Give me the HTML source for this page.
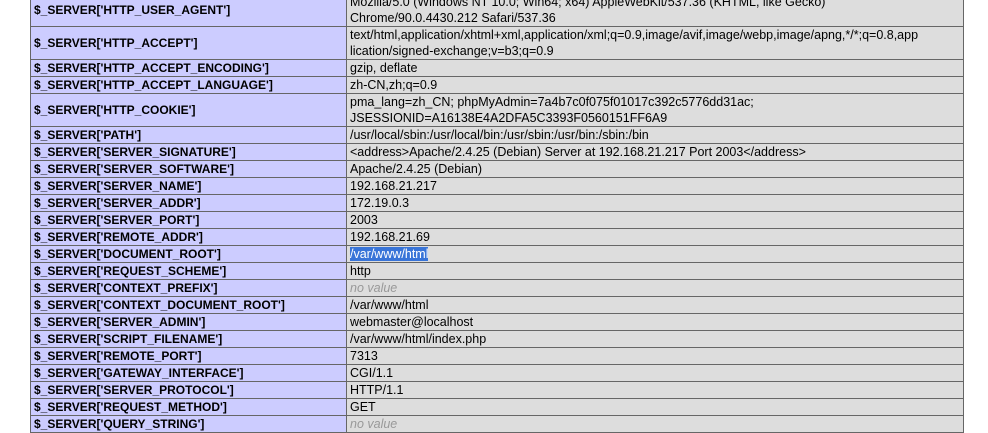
<!DOCTYPE html>
<html><head><meta charset="utf-8"><style>
html,body{margin:0;padding:0;background:#fff;width:988px;height:419px;overflow:hidden}
table{position:absolute;left:30px;top:-7px;width:934px;border-collapse:collapse;font-family:"Liberation Sans","Noto Sans CJK SC",sans-serif;font-size:12.5px;color:#000}
td{border:1px solid #666;padding:0 3px;line-height:16px;vertical-align:middle}
td.e{background:#ccf;font-weight:bold;width:309px;font-size:12px}
td.v{background:#ddd;word-break:break-all}
i{color:#999}
.sel{background:#3874d8;color:#fff}
</style></head><body>
<table>
<tr><td class="e">$_SERVER['HTTP_USER_AGENT']</td><td class="v">Mozilla/5.0 (Windows NT 10.0; Win64; x64) AppleWebKit/537.36 (KHTML, like Gecko)<br>Chrome/90.0.4430.212 Safari/537.36</td></tr>
<tr><td class="e">$_SERVER['HTTP_ACCEPT']</td><td class="v">text/html,application/xhtml+xml,application/xml;q=0.9,image/avif,image/webp,image/apng,*/*;q=0.8,app<br>lication/signed-exchange;v=b3;q=0.9</td></tr>
<tr><td class="e">$_SERVER['HTTP_ACCEPT_ENCODING']</td><td class="v">gzip, deflate</td></tr>
<tr><td class="e">$_SERVER['HTTP_ACCEPT_LANGUAGE']</td><td class="v">zh-CN,zh;q=0.9</td></tr>
<tr><td class="e">$_SERVER['HTTP_COOKIE']</td><td class="v">pma_lang=zh_CN; phpMyAdmin=7a4b7c0f075f01017c392c5776dd31ac;<br>JSESSIONID=A16138E4A2DFA5C3393F0560151FF6A9</td></tr>
<tr><td class="e">$_SERVER['PATH']</td><td class="v">/usr/local/sbin:/usr/local/bin:/usr/sbin:/usr/bin:/sbin:/bin</td></tr>
<tr><td class="e">$_SERVER['SERVER_SIGNATURE']</td><td class="v">&lt;address&gt;Apache/2.4.25 (Debian) Server at 192.168.21.217 Port 2003&lt;/address&gt;</td></tr>
<tr><td class="e">$_SERVER['SERVER_SOFTWARE']</td><td class="v">Apache/2.4.25 (Debian)</td></tr>
<tr><td class="e">$_SERVER['SERVER_NAME']</td><td class="v">192.168.21.217</td></tr>
<tr><td class="e">$_SERVER['SERVER_ADDR']</td><td class="v">172.19.0.3</td></tr>
<tr><td class="e">$_SERVER['SERVER_PORT']</td><td class="v">2003</td></tr>
<tr><td class="e">$_SERVER['REMOTE_ADDR']</td><td class="v">192.168.21.69</td></tr>
<tr><td class="e">$_SERVER['DOCUMENT_ROOT']</td><td class="v"><span class="sel">/var/www/html</span></td></tr>
<tr><td class="e">$_SERVER['REQUEST_SCHEME']</td><td class="v">http</td></tr>
<tr><td class="e">$_SERVER['CONTEXT_PREFIX']</td><td class="v"><i>no value</i></td></tr>
<tr><td class="e">$_SERVER['CONTEXT_DOCUMENT_ROOT']</td><td class="v">/var/www/html</td></tr>
<tr><td class="e">$_SERVER['SERVER_ADMIN']</td><td class="v">webmaster@localhost</td></tr>
<tr><td class="e">$_SERVER['SCRIPT_FILENAME']</td><td class="v">/var/www/html/index.php</td></tr>
<tr><td class="e">$_SERVER['REMOTE_PORT']</td><td class="v">7313</td></tr>
<tr><td class="e">$_SERVER['GATEWAY_INTERFACE']</td><td class="v">CGI/1.1</td></tr>
<tr><td class="e">$_SERVER['SERVER_PROTOCOL']</td><td class="v">HTTP/1.1</td></tr>
<tr><td class="e">$_SERVER['REQUEST_METHOD']</td><td class="v">GET</td></tr>
<tr><td class="e">$_SERVER['QUERY_STRING']</td><td class="v"><i>no value</i></td></tr>
</table>
</body></html>
